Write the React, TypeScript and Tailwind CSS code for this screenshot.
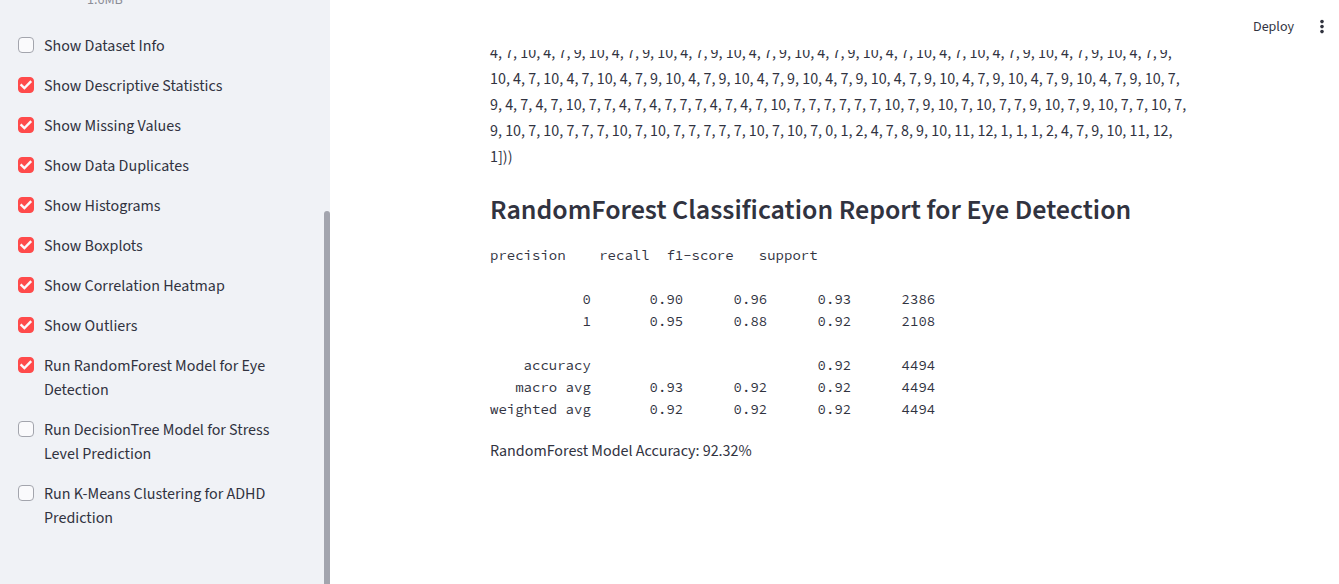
import React, { useState } from "react";

type Option = { id: string; label: string; checked: boolean };

const OPTIONS: Option[] = [
  { id: "dataset-info", label: "Show Dataset Info", checked: false },
  { id: "descriptive-statistics", label: "Show Descriptive Statistics", checked: true },
  { id: "missing-values", label: "Show Missing Values", checked: true },
  { id: "data-duplicates", label: "Show Data Duplicates", checked: true },
  { id: "histograms", label: "Show Histograms", checked: true },
  { id: "boxplots", label: "Show Boxplots", checked: true },
  { id: "correlation-heatmap", label: "Show Correlation Heatmap", checked: true },
  { id: "outliers", label: "Show Outliers", checked: true },
  { id: "random-forest", label: "Run RandomForest Model for Eye Detection", checked: true },
  { id: "decision-tree", label: "Run DecisionTree Model for Stress Level Prediction", checked: false },
  { id: "k-means", label: "Run K-Means Clustering for ADHD Prediction", checked: false },
];

const VALUE_LINES = [
  "4, 7, 10, 4, 7, 9, 10, 4, 7, 9, 10, 4, 7, 9, 10, 4, 7, 9, 10, 4, 7, 9, 10, 4, 7, 10, 4, 7, 10, 4, 7, 9, 10, 4, 7, 9, 10, 4, 7, 9,",
  "10, 4, 7, 10, 4, 7, 10, 4, 7, 9, 10, 4, 7, 9, 10, 4, 7, 9, 10, 4, 7, 9, 10, 4, 7, 9, 10, 4, 7, 9, 10, 4, 7, 9, 10, 4, 7, 9, 10, 7,",
  "9, 4, 7, 4, 7, 10, 7, 7, 4, 7, 4, 7, 7, 7, 4, 7, 4, 7, 10, 7, 7, 7, 7, 7, 7, 10, 7, 9, 10, 7, 10, 7, 7, 9, 10, 7, 9, 10, 7, 7, 10, 7,",
  "9, 10, 7, 10, 7, 7, 7, 10, 7, 10, 7, 7, 7, 7, 7, 10, 7, 10, 7, 0, 1, 2, 4, 7, 8, 9, 10, 11, 12, 1, 1, 1, 2, 4, 7, 9, 10, 11, 12,",
  "1]))",
];

const REPORT = [
  "precision    recall  f1-score   support",
  "",
  "           0       0.90      0.96      0.93      2386",
  "           1       0.95      0.88      0.92      2108",
  "",
  "    accuracy                           0.92      4494",
  "   macro avg       0.93      0.92      0.92      4494",
  "weighted avg       0.92      0.92      0.92      4494",
].join("\n");

function Checkbox({ option }: { option: Option }) {
  const [checked, setChecked] = useState(option.checked);
  return (
    <label htmlFor={option.id} className="flex items-start gap-2.5 text-[16px] leading-6">
      <span className="mt-[3px] grid size-4 shrink-0">
        <input
          id={option.id}
          type="checkbox"
          checked={checked}
          onChange={(e) => setChecked(e.target.checked)}
          className="col-start-1 row-start-1 size-4 appearance-none rounded-[4px] border border-[#a3a5ad] bg-[#fafafc] checked:border-[#ff4b4b] checked:bg-[#ff4b4b]"
        />
        {checked && (
          <svg
            viewBox="0 0 16 16"
            className="pointer-events-none col-start-1 row-start-1 size-4"
            fill="none"
            aria-hidden="true"
          >
            <path d="M2.6 7.4 6.4 11 13.2 4.2" stroke="#fafafc" strokeWidth="2.4" />
          </svg>
        )}
      </span>
      <span>{option.label}</span>
    </label>
  );
}

export default function App() {
  return (
    <div className="flex h-screen overflow-hidden bg-white font-['Source_Sans_Pro','Source_Sans_3','Noto_Sans_CJK_SC',sans-serif] text-[#31333f]">
      <aside className="flex w-[330px] shrink-0 overflow-hidden bg-[#f0f2f6]">
        <div className="-mt-2.5 flex min-w-0 flex-1 flex-col pr-8 pl-[18px]">
          <div className="mb-[23px] pl-[69px] text-[14px] leading-[21px] text-[#8b8d97]">1.6MB</div>
          <div className="flex flex-col gap-4">
            {OPTIONS.map((option) => (
              <Checkbox key={option.id} option={option} />
            ))}
          </div>
        </div>
        <div className="flex w-1.5 flex-col pt-[211px]">
          <div className="flex-1 rounded-t-full bg-[#a3a5ae]" />
        </div>
      </aside>

      <div className="flex min-w-0 flex-1 flex-col">
        <header className="flex h-[50px] shrink-0 items-center justify-end gap-[18px] pt-[3px] pr-[7px]">
          <button type="button" className="text-[14px] leading-5">
            Deploy
          </button>
          <button type="button" aria-label="Main menu" className="flex w-5 justify-center">
            <svg viewBox="0 0 4 16" className="h-4 w-1" fill="currentColor" aria-hidden="true">
              <circle cx="2" cy="2.6" r="1.8" />
              <circle cx="2" cy="7.6" r="1.8" />
              <circle cx="2" cy="12.6" r="1.8" />
            </svg>
          </button>
        </header>

        <main className="min-h-0 flex-1 overflow-hidden pl-[15px]">
          <div className="mx-auto max-w-[704px]">
            <p className="-mt-2.5 text-[16px] leading-[26px]">
              {VALUE_LINES.map((line, i) => (
                <React.Fragment key={i}>
                  {i > 0 && <br />}
                  {line}
                </React.Fragment>
              ))}
            </p>
            <h3 className="pt-5 text-[28px] leading-[40px] font-semibold">
              RandomForest Classification Report for Eye Detection
            </h3>
            <pre className="pt-3.5 font-['Source_Code_Pro','Liberation_Mono',monospace] text-[14px] leading-[22px]">
              {REPORT}
            </pre>
            <p className="pt-[18px] text-[16px] leading-[26px]">RandomForest Model Accuracy: 92.32%</p>
          </div>
        </main>
      </div>
    </div>
  );
}
